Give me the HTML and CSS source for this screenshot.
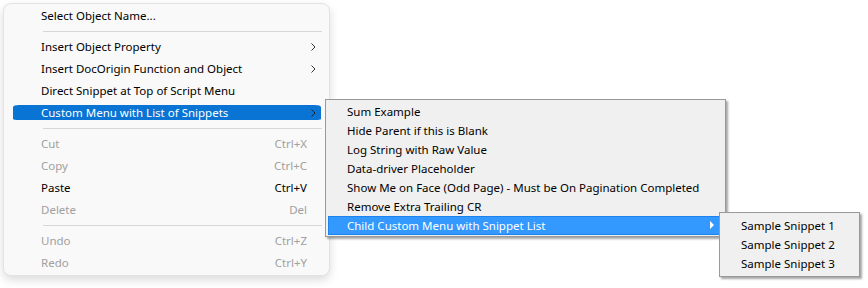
FILE: index.html
```html
<!DOCTYPE html>
<html lang="en">
<head>
  <meta charset="UTF-8">
  <title>Script Menu</title>
  <link rel="stylesheet" href="styles.css">
</head>
<body>
  <div class="desk">
    <div class="menu">
      <div class="item">Select Object Name...</div>
      <div class="sep"></div>
      <div class="item">Insert Object Property<span class="chev"><svg width="5" height="8" viewBox="0 0 5 8"><polyline points="0.5,0.5 4,4 0.5,7.5" fill="none" stroke="#333" stroke-width="1"/></svg></span></div>
      <div class="item">Insert DocOrigin Function and Object<span class="chev"><svg width="5" height="8" viewBox="0 0 5 8"><polyline points="0.5,0.5 4,4 0.5,7.5" fill="none" stroke="#333" stroke-width="1"/></svg></span></div>
      <div class="item">Direct Snippet at Top of Script Menu</div>
      <div class="item active">Custom Menu with List of Snippets<span class="chev"><svg width="5" height="8" viewBox="0 0 5 8"><polyline points="0.5,0.5 4,4 0.5,7.5" fill="none" stroke="#222" stroke-width="1"/></svg></span></div>
      <div class="sep"></div>
      <div class="item disabled">Cut<span class="key">Ctrl+X</span></div>
      <div class="item disabled">Copy<span class="key">Ctrl+C</span></div>
      <div class="item">Paste<span class="key">Ctrl+V</span></div>
      <div class="item disabled">Delete<span class="key">Del</span></div>
      <div class="sep"></div>
      <div class="item disabled">Undo<span class="key">Ctrl+Z</span></div>
      <div class="item disabled">Redo<span class="key">Ctrl+Y</span></div>
    </div>

    <div class="submenu snippets">
      <div class="sub-item">Sum Example</div>
      <div class="sub-item">Hide Parent if this is Blank</div>
      <div class="sub-item">Log String with Raw Value</div>
      <div class="sub-item">Data-driver Placeholder</div>
      <div class="sub-item">Show Me on Face (Odd Page) - Must be On Pagination Completed</div>
      <div class="sub-item">Remove Extra Trailing CR</div>
      <div class="sub-item active">Child Custom Menu with Snippet List<span class="arrow"></span></div>
    </div>

    <div class="submenu child">
      <div class="sub-item">Sample Snippet 1</div>
      <div class="sub-item">Sample Snippet 2</div>
      <div class="sub-item">Sample Snippet 3</div>
    </div>
  </div>
</body>
</html>
```

FILE: styles.css
```css
body {
  margin: 0;
  background: #fff;
  font-family: "Noto Sans", "Open Sans", sans-serif;
  font-size: 11.5px;
  color: #000;
}

.desk {
  position: relative;
  box-sizing: border-box;
  width: 868px;
  height: 288px;
  padding: 3px 0 0 3px;
}

/* main context menu */
.menu {
  box-sizing: border-box;
  width: 327px;
  height: 273px;
  padding-top: 1px;
  background: #f9f9f9;
  border: 1px solid #e3e3e3;
  border-radius: 8px;
  box-shadow: 0 4px 10px rgba(0, 0, 0, 0.14);
}

.item {
  box-sizing: border-box;
  display: flex;
  align-items: center;
  height: 22px;
  margin: 0 8px 0 9px;
  padding: 0 14px 1px 28px;
  white-space: nowrap;
  position: relative;
}

.item .key {
  margin-left: auto;
}

.item .chev {
  position: absolute;
  right: 5px;
  top: 7px;
  line-height: 0;
}

.item.disabled {
  color: #a0a0a0;
}

.item.active {
  color: #fff;
  background: #0a74d4;
  background-clip: padding-box;
  border-top: 3px solid transparent;
  border-bottom: 4px solid transparent;
  padding-bottom: 0;
  border-radius: 6px / 5px;
}

.item.active .chev {
  top: 4px;
}

.sep {
  height: 9px;
  margin: 0 7px 0 39px;
  background: linear-gradient(#d6d6d6, #d6d6d6) no-repeat 0 4px / 100% 1px;
}

/* classic submenus */
.submenu {
  position: absolute;
  box-sizing: border-box;
  padding: 2px;
  background: #f0f0f0;
  border: 1px solid #999;
  box-shadow: 2px 2px 2px rgba(0, 0, 0, 0.35);
}

.snippets {
  left: 325px;
  top: 99px;
  width: 401px;
  height: 138px;
}

.child {
  left: 719px;
  top: 212px;
  width: 141px;
  height: 65px;
  padding-top: 3px;
}

.sub-item {
  box-sizing: border-box;
  display: flex;
  align-items: center;
  height: 19px;
  padding: 0 0 1px 19px;
  white-space: nowrap;
  position: relative;
}

.sub-item.active {
  color: #fff;
  background: #3399ff;
  border: 1px solid #1c84ef;
  padding: 0 0 0 18px;
}

.sub-item .arrow {
  position: absolute;
  right: 8px;
  top: 4px;
  border-left: 4px solid #fff;
  border-top: 4px solid transparent;
  border-bottom: 4px solid transparent;
}
```
